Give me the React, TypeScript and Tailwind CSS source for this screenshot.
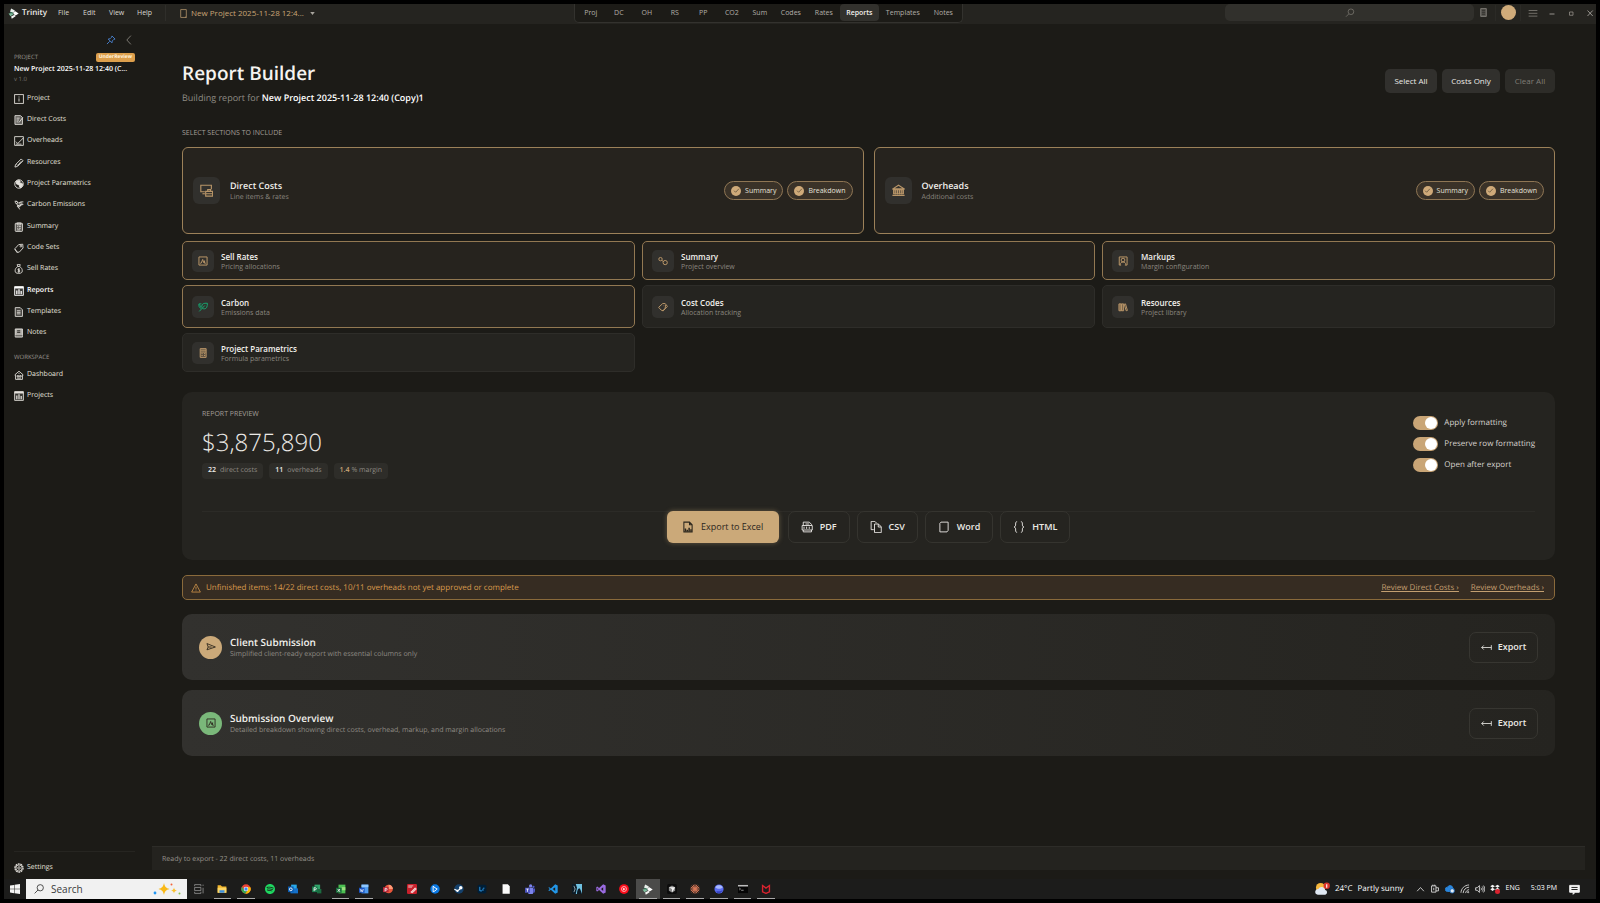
import { useState } from "react";
import type { ReactNode } from "react";
import { SiSpotify } from "react-icons/si";

type IconProps = { className?: string; children: ReactNode; w?: number };

function Ico({ className = "size-[10px]", children, w = 1.4 }: IconProps) {
  return (
    <svg
      viewBox="0 0 16 16"
      className={`shrink-0 ${className}`}
      fill="none"
      stroke="currentColor"
      strokeWidth={w}
      aria-hidden="true"
    >
      {children}
    </svg>
  );
}

const TrinityMark = ({ className = "size-[11px]" }: { className?: string }) => (
  <svg viewBox="0 0 16 16" className={`shrink-0 ${className}`} aria-hidden="true">
    <path d="M4.5.8 10 3.5 8 7.2 3 5.5z" fill="#e9efec" />
    <path d="M10 4.5 15.6 8 11 11 7.5 8.2z" fill="#ffffff" />
    <path d="M.8 8 6.5 7.4 8 9.2 3.5 12z" fill="#7fbf9f" />
    <path d="M4.5 12.5 9.5 9.8 11 12 5.5 15.5z" fill="#f4f7f5" />
    <path d="M3 5.5 8 7.2 7.4 8.2 3.4 7z" fill="#2f7d5b" />
  </svg>
);

const navIcons: Record<string, ReactNode> = {
  Project: (
    <>
      <rect x="1" y="1" width="14" height="14" />
      <path d="M8 7v5M8 4v1.6" />
    </>
  ),
  "Direct Costs": (
    <>
      <path d="M1.5 1h9l3 3v11h-12z" fill="currentColor" fillOpacity=".35" />
      <path d="M4 5h5M4 8h4M4 11h3M8 12l6-8" />
    </>
  ),
  Overheads: (
    <>
      <path d="M1 1h14v14H1z" />
      <path d="M3 9l3 3 9-9M3 13h9" />
    </>
  ),
  Resources: (
    <>
      <path d="M1.5 14.5l1-4 9-9 3 3-9 9z" />
      <path d="M4 10l2 2 6-7" />
    </>
  ),
  "Project Parametrics": (
    <>
      <circle cx="8" cy="8" r="6.8" />
      <path d="M3 4l4-2 3 1-1 3 4 1 1 3-3 4-2-1-1-4-4-1z" fill="currentColor" />
    </>
  ),
  "Carbon Emissions": (
    <>
      <path d="M1 2h3l3 3 4-2h4M4 5l2 4 5-1 4-1M6 9l3 6M11 8l-2 3" />
      <circle cx="4" cy="4" r="1.8" />
      <circle cx="11" cy="6" r="1.8" />
      <circle cx="7" cy="10" r="1.6" />
    </>
  ),
  Summary: (
    <>
      <rect x="2" y="2" width="11.5" height="13" rx="1" fill="currentColor" fillOpacity=".3" />
      <path d="M5 1.5h6v3H5zM5 7h2M8 7h3M5 10h2M8 10h3M5 12.6h5" />
    </>
  ),
  "Code Sets": (
    <>
      <path d="M1.5 9l6-6.5L14 2l.5 6-6 6.5-4 .5z" />
      <circle cx="11" cy="5" r="1.4" />
      <path d="M1 10l5 5" />
    </>
  ),
  "Sell Rates": (
    <>
      <path d="M5 1h5l-1 3H6zM6 4C3 6 1.8 8 1.8 11c0 3 2 4 5.7 4s5.7-1 5.7-4c0-3-1.2-5-4.2-7" />
      <path d="M9.5 8H6.5v2H9v2.5H5.8M7.6 7v7" />
    </>
  ),
  Reports: (
    <>
      <path d="M1 1h14v14H1z" fill="currentColor" fillOpacity=".15" />
      <path d="M1 2.5h14" strokeWidth="3" />
      <path d="M4.5 7v6M8 5v8M11.5 8v5" strokeWidth="2" />
    </>
  ),
  Templates: (
    <>
      <path d="M2 1h8l3.5 3.5V15H2z" fill="currentColor" fillOpacity=".2" />
      <path d="M4.5 6h6M4.5 8.5h6M4.5 11h6" />
    </>
  ),
  Notes: (
    <>
      <path d="M2 1.5h11.5v13H2z" fill="currentColor" fillOpacity=".75" />
      <path d="M5 4.5h5M5 7h5" stroke="#1c1b17" />
      <path d="M2 12.5h11.5" stroke="#1c1b17" strokeWidth="1" />
    </>
  ),
  Dashboard: (
    <>
      <path d="M1 8l7-6 7 6M2.5 7.5V15h11V7.5" />
      <path d="M5 9h2.5v2H5zM9 9h2.5v2H9zM5 13h6M8 5v1.5" />
    </>
  ),
};
navIcons.Projects = navIcons.Reports;

const mainNav = [
  "Project",
  "Direct Costs",
  "Overheads",
  "Resources",
  "Project Parametrics",
  "Carbon Emissions",
  "Summary",
  "Code Sets",
  "Sell Rates",
  "Reports",
  "Templates",
  "Notes",
];

function NavItem({ name, active = false }: { name: string; active?: boolean }) {
  return (
    <a
      href="#"
      aria-current={active ? "page" : undefined}
      className={`flex items-center gap-[3px] text-[7px] leading-[10px] ${
        active ? "font-semibold text-white" : "text-[#e4e1dc]"
      }`}
    >
      <Ico>{navIcons[name]}</Ico>
      {name}
    </a>
  );
}

function Sidebar() {
  return (
    <aside className="flex w-[148px] shrink-0 flex-col pr-[17px] pl-[10px]">
      <div className="flex h-[21px] items-end justify-end gap-[8px] pr-px">
        <button type="button" aria-label="Pin sidebar" className="text-[#4b86d8]">
          <Ico className="size-[10px]">
            <path d="M9.5 1.5l5 5-2 .5-2.5 2.5-.5 3-6-6 3-.5L9 3.5zM6 10l-4.5 4.5" />
          </Ico>
        </button>
        <button type="button" aria-label="Collapse sidebar" className="text-[#9a968f]">
          <Ico className="size-[10px]" w={1.2}>
            <path d="M11 1L4.5 8l6.5 7" />
          </Ico>
        </button>
      </div>
      <div className="flex h-[18px] items-center justify-between pt-[6px]">
        <span className="text-[6px] leading-[8px] text-[#9a968f]">PROJECT</span>
        <span className="rounded-[2px] bg-[#dd9f4c] px-[3px] text-[5px] leading-[9px] font-bold text-[#fff4df]">
          UnderReview
        </span>
      </div>
      <p className="mt-[2px] text-[7px] leading-[10px] font-semibold whitespace-nowrap text-white">
        New Project 2025-11-28 12:40 (C...
      </p>
      <p className="text-[6px] leading-[9px] text-[#76726c]">v 1.0</p>
      <nav aria-label="Project" className="mt-[4px] grid h-[256px] auto-rows-fr">
        {mainNav.map((n) => (
          <NavItem key={n} name={n} active={n === "Reports"} />
        ))}
      </nav>
      <p className="mt-[9px] text-[6px] leading-[8px] text-[#9a968f]">WORKSPACE</p>
      <nav aria-label="Workspace" className="mt-[3px] grid h-[43px] auto-rows-fr">
        <NavItem name="Dashboard" />
        <NavItem name="Projects" />
      </nav>
      <div className="mt-auto border-t border-[#262521] pt-[10px] pb-[5px]">
        <a href="#" className="flex items-center gap-[3px] text-[7px] leading-[12px] text-[#e4e1dc]">
          <Ico>
            <circle cx="8" cy="8" r="6.5" strokeDasharray="3 1" strokeWidth="2" />
            <circle cx="8" cy="8" r="5" />
            <circle cx="8" cy="8" r="2" />
          </Ico>
          Settings
        </a>
      </div>
    </aside>
  );
}

const tabs: [string, string][] = [
  ["Proj", "w-[28px]"],
  ["DC", "w-[28px]"],
  ["OH", "w-[28px]"],
  ["RS", "w-[28px]"],
  ["PP", "w-[29px]"],
  ["CO2", "w-[28px]"],
  ["Sum", "w-[28px]"],
  ["Codes", "w-[34px]"],
  ["Rates", "w-[32px]"],
  ["Reports", "w-[39px]"],
  ["Templates", "w-[48px]"],
  ["Notes", "w-[33px]"],
];

function TitleBar() {
  return (
    <header className="grid h-[20px] shrink-0 grid-cols-[9fr_auto_10fr] bg-[#252420]">
      <div className="flex items-center pb-[2px] pl-[4px]">
        <TrinityMark />
        <span className="ml-[3px] w-[36px] text-[8px] leading-[10px] font-semibold text-[#f0eeea]">Trinity</span>
        <div className="flex text-[7px] leading-[10px] text-[#dad7d1]">
          <button type="button" className="w-[25px] text-left">File</button>
          <button type="button" className="w-[26px] text-left">Edit</button>
          <button type="button" className="w-[28px] text-left">View</button>
          <button type="button" className="w-[28px] text-left">Help</button>
        </div>
        <span className="h-[16px] w-px bg-[#2f2e2a]" />
        <button type="button" className="ml-[13px] flex items-center gap-[3px] text-[#c9a576]">
          <Ico className="size-[9px]" w={1.2}>
            <path d="M3 1h10v14H3zM11 14l2 1" />
          </Ico>
          <span className="text-[8px] leading-[10px] font-medium">New Project 2025-11-28 12:4...</span>
          <svg viewBox="0 0 6 4" className="ml-[3px] h-[3px] w-[5px]" aria-hidden="true">
            <path d="M0 0h6L3 4z" fill="#a8a49d" />
          </svg>
        </button>
      </div>

      <nav
        aria-label="Sections"
        className="flex h-[19px] rounded-b-[5px] border border-t-0 border-[#33322e] bg-[#1c1b17] px-[2px] pb-px"
      >
        {tabs.map(([t, w]) => (
          <button
            key={t}
            type="button"
            className={`${w} rounded-[4px] text-center text-[7px] leading-[10px] ${
              t === "Reports" ? "bg-[#32312d] font-semibold text-[#f2f0ec]" : "text-[#b3afa8]"
            }`}
          >
            {t}
          </button>
        ))}
      </nav>

      <div className="flex items-center justify-end pb-[3px] text-[#8a867f]">
        <label className="relative flex h-[17px] w-[249px] items-center rounded-[5px] bg-[#31302c]">
          <input
            type="search"
            aria-label="Search"
            className="size-full rounded-[5px] bg-transparent px-2 text-[8px] text-white outline-none"
          />
          <Ico className="absolute left-[120px] size-[10px]" w={1}>
            <circle cx="9.5" cy="6" r="4.5" />
            <path d="M6 9.5L1.5 14" />
          </Ico>
        </label>
        <button type="button" aria-label="Calculator" className="ml-[5px]">
          <Ico className="size-[9px]">
            <path d="M3 1h10v14H3z" fill="currentColor" fillOpacity=".5" />
            <path d="M5 4h6M5 7.5h6M5 11h6" stroke="#252420" />
          </Ico>
        </button>
        <span className="mr-[5px] ml-[7px] h-[16px] w-px bg-[#2b2a26]" />
        <button type="button" aria-label="Account" className="size-[15px] rounded-full bg-[#d0ab7a]" />
        <span className="ml-[4px] h-[16px] w-px bg-[#2b2a26]" />
        <button type="button" aria-label="Menu" className="ml-[7px]">
          <Ico className="size-[10px]" w={1.2}>
            <path d="M1 4h14M1 8.5h14M1 13h14" />
          </Ico>
        </button>
        <button type="button" aria-label="Minimize" className="ml-[10px] text-[#c5c2bc]">
          <Ico className="size-[8px]">
            <path d="M3 10h10" />
          </Ico>
        </button>
        <button type="button" aria-label="Maximize" className="ml-[11px] text-[#a09c95]">
          <Ico className="size-[8px]">
            <path d="M5 6h7v6.5H5z" />
          </Ico>
        </button>
        <button type="button" aria-label="Close" className="mr-[2px] ml-[11px] text-[#c5c2bc]">
          <Ico className="size-[8px]">
            <path d="M3 3l10.5 11M13.5 3L3 14" />
          </Ico>
        </button>
      </div>
    </header>
  );
}

function Pill({ label }: { label: string }) {
  const [on, setOn] = useState(true);
  return (
    <button
      type="button"
      aria-pressed={on}
      onClick={() => setOn(!on)}
      className="flex h-[19px] items-center gap-[4px] rounded-full border border-[#8f7654] bg-[#3a3228] px-[6px] text-[7px] leading-[10px] text-[#e6e2dc]"
    >
      <span className="flex size-[10px] items-center justify-center rounded-full bg-[#cfaa79] text-[#4a3d2b]">
        {on && (
          <Ico className="size-[7px]" w={1.5}>
            <path d="M2.5 8.5L6 12l7.5-8" />
          </Ico>
        )}
      </span>
      {label}
    </button>
  );
}

function WideCard({ title, sub, icon }: { title: string; sub: string; icon: ReactNode }) {
  return (
    <section className="flex h-[87px] flex-1 items-center rounded-[6px] border border-[#9c8159] bg-[#26231e] px-[10px]">
      <span className="flex size-[27px] items-center justify-center rounded-[6px] bg-[#31302d] text-[#b89568]">
        <Ico className="size-[13px]" w={1.4}>{icon}</Ico>
      </span>
      <div className="ml-[10px] pt-[2px]">
        <h3 className="text-[9px] leading-[12px] font-semibold text-[#f2f0ec]">{title}</h3>
        <p className="text-[7px] leading-[12px] text-[#8a867f]">{sub}</p>
      </div>
      <div className="ml-auto flex gap-[4px]">
        <Pill label="Summary" />
        <Pill label="Breakdown" />
      </div>
    </section>
  );
}

const chartIcon = (
  <>
    <path d="M1.5 1.5h13v13h-13z" />
    <path d="M3.5 11.5H5l2.500-6 1.500 5 1.500-3v4h2" />
  </>
);

type Section = { title: string; sub: string; on: boolean; icon: ReactNode; green?: boolean };

const sections: Section[] = [
  { title: "Sell Rates", sub: "Pricing allocations", on: true, icon: chartIcon },
  {
    title: "Summary",
    sub: "Project overview",
    on: true,
    icon: (
      <>
        <circle cx="4" cy="5" r="2.7" />
        <circle cx="11.5" cy="10.5" r="3.4" />
        <path d="M6 7l3 2" />
      </>
    ),
  },
  {
    title: "Markups",
    sub: "Margin configuration",
    on: true,
    icon: (
      <>
        <path d="M2 14.5v-13h12.5v13H11M2 14.5h3" />
        <circle cx="8" cy="6.5" r="3" />
        <path d="M3.5 14c0-3 2-4.5 4.5-4.500s4.500 1.500 4.500 4.500" />
      </>
    ),
  },
  {
    title: "Carbon",
    sub: "Emissions data",
    on: true,
    green: true,
    icon: (
      <>
        <path d="M15 2c-6-.5-9 1-9 5 0 3 2 4 4 4 4 0 5-4 5-9zM2 15L11 5.5" />
        <path d="M5.5 3h-4C1 7 2 9.5 5 10" />
        <path d="M2 4l3 4" />
      </>
    ),
  },
  {
    title: "Cost Codes",
    sub: "Allocation tracking",
    on: false,
    icon: (
      <>
        <path d="M1 8.5l6.5-6h4L15 7l-6.5 7L5 13z" />
        <path d="M7.5 14c3-2 5-5 4.5-9M9 6h1" />
      </>
    ),
  },
  {
    title: "Resources",
    sub: "Project library",
    on: false,
    icon: (
      <>
        <path d="M1.5 3H5v11H1.5zM5.5 3H9v11H5.5z" fill="currentColor" fillOpacity=".55" />
        <path d="M10 3.5l2-.5 3 10.5-2 .5z" />
      </>
    ),
  },
  {
    title: "Project Parametrics",
    sub: "Formula parametrics",
    on: false,
    icon: (
      <>
        <path d="M3.5 1H13v14H3.5z" fill="currentColor" fillOpacity=".3" />
        <path d="M4 3.5h9M4 6.5h9M5.5 9h2M9.5 9h2M5.5 12h2M9.5 12h2" />
      </>
    ),
  },
];

function SectionCard({ s }: { s: Section }) {
  const [on, setOn] = useState(s.on);
  return (
    <button
      type="button"
      aria-pressed={on}
      onClick={() => setOn(!on)}
      className={`flex items-center rounded-[5px] border pl-[9px] text-left ${
        on ? "border-[#927852] bg-[#26231e]" : "border-[#2e2d29] bg-[#252420]"
      }`}
    >
      <span
        className={`flex size-[22px] items-center justify-center rounded-[5px] bg-[#31302d] ${
          s.green ? "text-[#17a56f]" : "text-[#b89568]"
        }`}
      >
        <Ico className="size-[10px]" w={1.6}>{s.icon}</Ico>
      </span>
      <span className="ml-[7px] flex flex-col pt-px">
        <span className="text-[8px] leading-[11px] font-semibold text-[#f2f0ec]">{s.title}</span>
        <span className="text-[7px] leading-[10px] text-[#8a867f]">{s.sub}</span>
      </span>
    </button>
  );
}

function Chip({ n, label, gold = false }: { n: string; label: string; gold?: boolean }) {
  return (
    <span className="flex h-[16px] items-center rounded-[4px] bg-[#2e2d29] px-[6px] text-[7px] leading-[10px] text-[#8f8b84]">
      <b className={`font-semibold ${gold ? "mr-[2px] text-[#c9a576]" : "mr-[4px] text-[#f2f0ec]"}`}>{n}</b>
      {label}
    </span>
  );
}

function Toggle({ label }: { label: string }) {
  return (
    <label className="flex h-[14px] items-center gap-[6px] text-[8px] leading-[10px] text-[#d6d3ce]">
      <input
        type="checkbox"
        role="switch"
        defaultChecked
        className="flex h-[14px] w-[25px] appearance-none items-center rounded-full bg-[#45433e] px-px before:size-[12px] before:rounded-full before:bg-white checked:justify-end checked:bg-[#c9a576]"
      />
      {label}
    </label>
  );
}

const formats: { label: string; icon: ReactNode }[] = [
  {
    label: "PDF",
    icon: (
      <>
        <path d="M3 6V1.5h8L14 4.5V6M3 12v2.5h11V12M1.5 6H15v6H1.5z" />
        <path d="M4 7.5v3M7.5 7.5v3M11 7.5v3M6 4h5" />
      </>
    ),
  },
  {
    label: "CSV",
    icon: (
      <>
        <path d="M5 11.5H1.5V.5h5L9 3" />
        <path d="M6 4h5l4 3.5v8H6zM11 4v4h4" />
      </>
    ),
  },
  {
    label: "Word",
    icon: (
      <>
        <path d="M4 1.5h9.5v11M12 14.5H2.5V3" />
        <path d="M4 1.5L2.5 3M13.5 12.5L12 14.5" />
      </>
    ),
  },
  {
    label: "HTML",
    icon: (
      <>
        <path d="M5.5 1c-2 0-2 1-2 3s0 3.500-2 4c2 .5 2 2 2 4s0 3 2 3" />
        <path d="M10.5 1c2 0 2 1 2 3s0 3.500 2 4c-2 .5-2 2-2 4s0 3-2 3" />
      </>
    ),
  },
];

function Preview() {
  return (
    <section className="mt-[20px] flex h-[168px] flex-col rounded-[10px] bg-[#252420] px-[20px] pt-[18px]">
      <div className="flex h-[101px] items-start justify-between">
        <div>
          <h2 className="text-[7px] leading-[10px] text-[#a39f98]">REPORT PREVIEW</h2>
          <p className="mt-[7px] text-[24px] leading-[32px] font-light text-[#eceae6]">$3,875,890</p>
          <div className="mt-[4px] flex gap-[6px]">
            <Chip n="22" label="direct costs" />
            <Chip n="11" label="overheads" />
            <Chip n="1.4" label="% margin" gold />
          </div>
        </div>
        <div className="mt-[6px] flex flex-col gap-[7px]">
          <Toggle label="Apply formatting" />
          <Toggle label="Preserve row formatting" />
          <Toggle label="Open after export" />
        </div>
      </div>
      <div className="border-t border-[#2c2b27]">
        <div className="-mt-px flex justify-center gap-[7px] text-[9px] leading-[12px] font-semibold text-[#eceae6]">
          <button
            type="button"
            className="mr-[2px] flex h-[32px] w-[112px] items-center justify-center gap-[7px] rounded-[6px] bg-[#cba979] font-medium text-[#2b261d] shadow-[0_0_5px_rgba(203,169,121,0.4)]"
          >
            <Ico className="size-[12px]">
              <path d="M2.5 1.5H10L13.5 5v9.5h-11zM10 1.5V5h3.5" />
              <path d="M4.5 14v-4M7 14v-2.5M9.5 14V9M12 14v-3" strokeWidth="2" />
            </Ico>
            Export to Excel
          </button>
          {formats.map((f) => (
            <button
              key={f.label}
              type="button"
              className="flex h-[32px] items-center gap-[7px] rounded-[7px] border border-[#35342f] bg-[#252420] px-[12px]"
            >
              <Ico className="size-[12px]" w={1.2}>{f.icon}</Ico>
              {f.label}
            </button>
          ))}
        </div>
      </div>
    </section>
  );
}

function Submission({ title, sub, tone, icon }: { title: string; sub: string; tone: string; icon: ReactNode }) {
  return (
    <section className="mt-[10px] flex h-[66px] items-center rounded-[10px] bg-linear-to-r from-[#32312e] to-[#252420] pr-[17px] pl-[17px]">
      <span className={`flex size-[23px] items-center justify-center rounded-full text-[#2b261d] ${tone}`}>
        <Ico className="size-[10px]">{icon}</Ico>
      </span>
      <div className="ml-[8px] pt-[2px]">
        <h3 className="text-[10px] leading-[13px] font-semibold text-[#f2f0ec]">{title}</h3>
        <p className="text-[7px] leading-[12px] text-[#8f8b84]">{sub}</p>
      </div>
      <button
        type="button"
        className="ml-auto flex h-[31px] w-[69px] items-center justify-center gap-[6px] rounded-[7px] border border-[#373631] text-[9px] leading-[12px] font-semibold text-[#eceae6]"
      >
        <Ico className="size-[11px]" w={1.2}>
          <path d="M4 5L1 8l3 3M1 8h14M15 4.5v7" />
        </Ico>
        Export
      </button>
    </section>
  );
}

function Content() {
  return (
    <main className="flex min-w-0 flex-1 flex-col">
      <div className="flex-1 pr-[41px] pl-[30px]">
        <div className="flex items-end justify-between pt-[35px]">
          <div>
            <h1 className="text-[19px] leading-[28px] font-semibold text-[#f5f3ef]">Report Builder</h1>
            <p className="mt-[4px] text-[9px] leading-[14px] text-[#8f8b84]">
              Building report for <b className="font-semibold text-white">New Project 2025-11-28 12:40 (Copy)1</b>
            </p>
          </div>
          <div className="mb-[12px] flex gap-[5px] text-[8px] leading-[10px] font-medium text-[#eceae6]">
            <button type="button" className="h-[24px] w-[52px] rounded-[5px] bg-[#31302d]">Select All</button>
            <button type="button" className="h-[24px] w-[58px] rounded-[5px] bg-[#31302d]">Costs Only</button>
            <button type="button" className="h-[24px] w-[50px] rounded-[5px] bg-[#2d2c28] text-[#807c76]">Clear All</button>
          </div>
        </div>
        <h2 className="mt-[24px] text-[7px] leading-[10px] text-[#a39f98]">SELECT SECTIONS TO INCLUDE</h2>
        <div className="mt-[8px] flex gap-[10px]">
          <WideCard
            title="Direct Costs"
            sub="Line items & rates"
            icon={
              <>
                <path d="M6 9.5H1v-8h13v5" />
                <path d="M3 12h3" />
                <path d="M7 9h8.5v6H7zM9.5 9V7H13v2M7 12h8.5" />
              </>
            }
          />
          <WideCard
            title="Overheads"
            sub="Additional costs"
            icon={
              <>
                <path d="M1 6l7-4.5L15 6z" />
                <path d="M2 7h12v5H2z" fill="currentColor" fillOpacity=".4" />
                <path d="M4 6.5v6M6.7 6.5v6M9.3 6.5v6M12 6.5v6M.5 14h15" />
              </>
            }
          />
        </div>
        <div className="mt-[7px] grid grid-cols-3 grid-rows-[39px_43px_39px] gap-x-[7px] gap-y-[5px]">
          {sections.map((s) => (
            <SectionCard key={s.title} s={s} />
          ))}
        </div>
        <Preview />
        <div className="mt-[15px] mb-[14px] flex h-[25px] items-center rounded-[5px] border border-[#8a6a3b] bg-[#362c22] px-[8px] text-[8px] leading-[10px] text-[#d99b4d]">
          <Ico className="size-[10px]" w={1.2}>
            <path d="M8 1.5l7 13H1zM8 6v4.5M8 12v1.2" />
          </Ico>
          <p className="ml-[5px]">Unfinished items: 14/22 direct costs, 10/11 overheads not yet approved or complete</p>
          <div className="ml-auto flex gap-[12px] pr-[2px] text-[#c39f70] underline">
            <a href="#">Review Direct Costs ›</a>
            <a href="#">Review Overheads ›</a>
          </div>
        </div>
        <Submission
          title="Client Submission"
          sub="Simplified client-ready export with essential columns only"
          tone="bg-[#cba979]"
          icon={<path d="M1.5 2.5L15 8 1.5 12.5 3.5 8zM3.5 8H9" />}
        />
        <Submission
          title="Submission Overview"
          sub="Detailed breakdown showing direct costs, overhead, markup, and margin allocations"
          tone="bg-[#7ab87a]"
          icon={chartIcon}
        />
      </div>
      <footer className="mr-[11px] mb-[9px] flex h-[24px] items-center border-t border-[#2d2c28] bg-[#24231f] px-[10px] pt-[2px] text-[7px] leading-[10px] text-[#96928b]">
        Ready to export - 22 direct costs, 11 overheads
      </footer>
    </main>
  );
}

type TaskApp = { name: string; open?: boolean; active?: boolean; art: ReactNode };

const apps: TaskApp[] = [
  {
    name: "Task view",
    art: (
      <g stroke="#b5b5b5" fill="none">
        <path d="M1 3.5V1h10v2.5M1 5.5h10v5H1zM1 12.500V15h10v-2.500M14.500 1v2M14.500 6v9" />
      </g>
    ),
  },
  {
    name: "File Explorer",
    open: true,
    art: (
      <>
        <path d="M1 2h5l2 2h7v10H1z" fill="#f2b62c" />
        <path d="M1 6h14v8H1z" fill="#fbd667" />
        <path d="M4 10h8v4H4z" fill="#3d8fe0" />
      </>
    ),
  },
  {
    name: "Chrome",
    open: true,
    art: (
      <>
        <circle cx="8" cy="8" r="7.5" fill="#e94335" />
        <path d="M1.5 4.2A7.5 7.5 0 0 0 7 15.4l3.5-5.9L5 9z" fill="#34a853" />
        <path d="M7 15.4A7.5 7.5 0 0 0 15 5H8l3 5z" fill="#fbbc05" />
        <circle cx="8" cy="8" r="3.6" fill="#fff" />
        <circle cx="8" cy="8" r="2.7" fill="#4285f4" />
      </>
    ),
  },
  { name: "Spotify", art: <SiSpotify color="#1ed760" size={16} /> },
  {
    name: "Outlook",
    art: (
      <>
        <path d="M5 1h9v9H5z" fill="#28a8ea" />
        <path d="M4 7h12v8H4z" fill="#1470c9" />
        <path d="M0 4h9v9H0z" fill="#0b5cb0" />
        <circle cx="4.5" cy="8.5" r="2.2" fill="none" stroke="#fff" strokeWidth="1.4" />
      </>
    ),
  },
  {
    name: "Project",
    art: (
      <>
        <path d="M4 1h9v7H4z" fill="#31a36a" />
        <path d="M8 8h7v7H8z" fill="#1c6b41" />
        <path d="M0 4h9v9H0z" fill="#16794a" />
        <path d="M3.3 11.5V6h2a1.5 1.5 0 0 1 0 3.200h-2" fill="none" stroke="#fff" strokeWidth="1.3" />
      </>
    ),
  },
  {
    name: "Excel",
    open: true,
    art: (
      <>
        <path d="M4 1h11v14H4z" fill="#4cbf52" />
        <path d="M9 5h6v5H9z" fill="#9be07d" />
        <path d="M0 6h9v8H0z" fill="#176d3b" />
        <path d="M2.7 8l3.6 4.5M6.3 8l-3.600 4.500" stroke="#fff" strokeWidth="1.3" />
      </>
    ),
  },
  {
    name: "Word",
    open: true,
    art: (
      <>
        <path d="M4 1h11v14H4z" fill="#4f9bf0" />
        <path d="M4 1h11v4H4z" fill="#8ec7ff" />
        <path d="M0 6h9v8H0z" fill="#1b55c4" />
        <path d="M2 8l1.3 4.5L4.5 9l1.200 3.500L7 8" stroke="#fff" fill="none" />
      </>
    ),
  },
  {
    name: "PowerPoint",
    art: (
      <>
        <circle cx="9" cy="8" r="6.8" fill="#e8553a" />
        <path d="M9 1.2A6.8 6.8 0 0 1 15.800 8H9z" fill="#ff9a76" />
        <path d="M0 5h9v8H0z" fill="#b9273a" />
        <path d="M3.3 12V7h2a1.3 1.3 0 0 1 0 2.800h-2" fill="none" stroke="#fff" strokeWidth="1.2" />
      </>
    ),
  },
  {
    name: "PDF editor",
    art: (
      <>
        <rect width="16" height="16" rx="2" fill="#c9202b" />
        <path d="M2 3h8M2 5h6M6 13l7-7 2 2-6 6z" stroke="#fff" fill="#f3b9b9" />
      </>
    ),
  },
  {
    name: "Player",
    art: (
      <>
        <circle cx="8" cy="8" r="7.5" fill="#0a78e3" />
        <path d="M5 3.5v9l3-1.5 3.5-3L8 6z" fill="none" stroke="#fff" strokeWidth="1.5" />
      </>
    ),
  },
  {
    name: "Steam",
    art: (
      <>
        <circle cx="8" cy="8" r="7.5" fill="#14406b" />
        <path d="M.6 8.5l5 2.5 4-3" stroke="#fff" strokeWidth="2" fill="none" />
        <circle cx="10.8" cy="6" r="2.8" fill="#fff" />
        <circle cx="5.5" cy="11" r="1.8" fill="#fff" />
      </>
    ),
  },
  {
    name: "Lightroom",
    art: (
      <>
        <rect x="1" y="1" width="14" height="14" rx="2.5" fill="#001e36" />
        <path d="M4.5 4.5V11H8M9.5 11V7.500c.5-.7 1.300-1 2.300-.8" stroke="#31a8ff" strokeWidth="1.4" fill="none" />
      </>
    ),
  },
  { name: "Document", art: <path d="M2.5.5H11L14 3.5v12H2.500z" fill="#fafafa" /> },
  {
    name: "Teams",
    art: (
      <>
        <circle cx="9" cy="3" r="2.6" fill="#7b83eb" />
        <circle cx="13.5" cy="4.5" r="1.8" fill="#5059c9" />
        <path d="M5 6h8v6a4 4 0 0 1-8 2z" fill="#7b83eb" />
        <path d="M13 7h3v4a3 3 0 0 1-3 3z" fill="#5059c9" />
        <path d="M0 6h8v8H0z" fill="#4b53bc" />
        <path d="M2 8h4M4 8v4.5" stroke="#fff" strokeWidth="1.2" />
      </>
    ),
  },
  {
    name: "VS Code",
    art: (
      <path
        d="M11.5.5l4 2v11l-4 2L4.5 9 2 11 .5 10 3 8 .5 6 2 5l2.5 2zM11.500 5l-4 3 4 3z"
        fill="#2397e8"
        fillRule="evenodd"
      />
    ),
  },
  {
    name: "Kindle",
    art: (
      <>
        <path d="M0 0h16v16H0z" fill="#6fc0e0" />
        <path d="M0 0h6l2 6-2 10H0zM8 16c0-5 1-8 3-9s3 4 5 9z" fill="#0c1a25" />
        <path d="M3 3l2 5-2 5" stroke="#d3eef8" fill="none" />
      </>
    ),
  },
  {
    name: "Visual Studio",
    art: (
      <path
        d="M11.5.5l4 2v11l-4 2L5 9.5 2 12 .5 11V5L2 4l3 2.5zM11.5 5L8 8l3.500 3zM2.200 6.200v3.600L4 8z"
        fill="#9a6be0"
        fillRule="evenodd"
      />
    ),
  },
  {
    name: "YouTube Music",
    art: (
      <>
        <circle cx="8" cy="8" r="7.8" fill="#fb0d1b" />
        <circle cx="8" cy="8" r="4" fill="none" stroke="#fff" />
        <path d="M6.7 5.8v4.4L10.300 8z" fill="#fff" />
      </>
    ),
  },
  { name: "Trinity", open: true, active: true, art: null },
  {
    name: "Cursor",
    open: true,
    art: (
      <>
        <rect width="16" height="16" rx="3" fill="#0c0c0c" />
        <path d="M8 2.5l5 2.8v5.500L8 13.500l-5-2.700V5.300z" fill="#8c8c8c" />
        <path d="M3 5.3h10L8 13.5V8z" fill="#f2f2f2" />
      </>
    ),
  },
  {
    name: "Claude",
    open: true,
    art: (
      <path
        d="M8 .5v15M.5 8h15M2.7 2.7l10.600 10.600M13.300 2.700L2.700 13.300M5 1.200l6 13.600M11 1.200L5 14.800M1.200 5l13.600 6M1.200 11l13.600-6"
        stroke="#d97757"
        strokeWidth="1.5"
      />
    ),
  },
  {
    name: "Messenger",
    open: true,
    art: (
      <>
        <circle cx="8" cy="8" r="7.3" fill="#5a6cf0" />
        <path d="M2 5c3-4 9-4 12 0-3 3-8 4-12 0z" fill="#a8b8ff" />
        <path d="M4 11c3 1 7 1 10-2-1 5-6 7-10 5z" fill="#3743c0" />
      </>
    ),
  },
  {
    name: "Terminal",
    open: true,
    art: (
      <>
        <path d="M0 1.5h16v13H0z" fill="#050505" />
        <path d="M0 1.5h16V4H0z" fill="#bdbdbd" />
        <path d="M2 6.5L4 8 2 9.500M5 10h4" stroke="#ddd" fill="none" />
      </>
    ),
  },
  {
    name: "McAfee",
    open: true,
    art: <path d="M2.500 12.500V2.500L8 6.500l5.500-4v10L8 15z" stroke="#d8232f" strokeWidth="2.2" fill="none" />,
  },
];

function Taskbar() {
  return (
    <footer className="flex h-[20px] shrink-0 items-stretch bg-[#1c1c1b] text-white">
      <button type="button" aria-label="Start" className="flex w-[22px] items-center justify-center">
        <svg viewBox="0 0 16 16" className="size-[10px]" aria-hidden="true">
          <path
            d="M0 2.3l6.6-.9v6.200H0zM7.400 1.300L16 0v7.600H7.400zM0 8.400h6.600v6.200L0 13.700zM7.400 8.400H16V16l-8.600-1.300z"
            fill="#f5f5f5"
          />
        </svg>
      </button>
      <label className="flex w-[161px] items-center bg-[#f1f1f1] pl-[8px] text-[#3a3a3a]">
        <Ico className="size-[10px]">
          <circle cx="10" cy="6" r="5" />
          <path d="M6.5 9.5L1 15" />
        </Ico>
        <input
          type="text"
          aria-label="Search Windows"
          placeholder="Search"
          className="ml-[7px] w-[90px] bg-transparent text-[10px] leading-[14px] outline-none placeholder:text-[#3a3a3a]"
        />
        <svg viewBox="0 0 28 14" className="ml-[12px] h-[14px] w-[28px]" aria-hidden="true">
          <path d="M11 1c.8 3.600 1.800 5 5.500 6-3.700 1-4.700 2.400-5.500 6-.8-3.600-1.800-5-5.500-6C9.200 6 10.200 4.600 11 1z" fill="#f9b916" />
          <path d="M21 5.500c.4 2 1 2.600 3 3-2 .5-2.600 1-3 3-.4-2-1-2.500-3-3 2-.4 2.600-1 3-3z" fill="#fbc02d" />
          <circle cx="2" cy="11" r="1.4" fill="#2196f3" />
          <circle cx="18.5" cy="2.5" r="1" fill="#f4623a" />
          <circle cx="26.5" cy="11.5" r="1" fill="#8bc34a" />
        </svg>
      </label>
      <nav aria-label="Apps" className="grid w-[591px] auto-cols-fr grid-flow-col">
        {apps.map((a) => (
          <button
            key={a.name}
            type="button"
            aria-label={a.name}
            className={`relative flex items-center justify-center ${a.active ? "bg-[#4b4b4a]" : ""}`}
          >
            {a.art ? (
              <svg viewBox="0 0 16 16" className="size-[10px]" aria-hidden="true">
                {a.art}
              </svg>
            ) : (
              <TrinityMark />
            )}
            {a.open && <span className="absolute inset-x-[3px] bottom-0 h-px bg-[#a9a9a9]" />}
          </button>
        ))}
      </nav>
      <div className="ml-auto flex items-center text-[7px] leading-[10px]">
        <svg viewBox="0 0 16 16" className="size-[15px]" aria-hidden="true">
          <circle cx="6" cy="6" r="5" fill="#f6b73c" />
          <path d="M3 13.5a3 3 0 0 1 .5-6 4 4 0 0 1 7.5 1 2.600 2.600 0 0 1 0 5z" fill="#dfe7f2" />
          <circle cx="12.5" cy="4" r="3.4" fill="#d8342c" />
          <path d="M12.5 2.4V6" stroke="#fff" strokeWidth="1.2" />
        </svg>
        <span className="ml-[5px] text-[8px]">24°C</span>
        <span className="ml-[5px] text-[8px]">Partly sunny</span>
        <span className="ml-[12px] flex items-center gap-[5px] text-[#dedede]">
          <Ico className="size-[9px]" w={1.5}>
            <path d="M2 11l6-6.5 6 6.5" />
          </Ico>
          <Ico className="size-[10px]">
            <path d="M2.5 3h7v10h-7zM4.5 1v2M7.500 1v2M6 6v4M9.500 6h4v5h-4" />
          </Ico>
          <Ico className="size-[10px]">
            <path d="M4 12a3.5 3.5 0 0 1 0-7 4.500 4.500 0 0 1 8.500 1.500A3 3 0 0 1 12.500 12z" fill="#2a86dd" stroke="#2a86dd" />
            <circle cx="11.5" cy="11" r="3.5" fill="#e5edf5" stroke="#1a68b8" />
          </Ico>
          <Ico className="size-[10px]">
            <path d="M1.5 14C2 7 7 2 14.5 1.5M5 14.500c.5-5 4-9 9.500-9.500M9 14.500c.5-3 2.500-5 5.500-5.500" />
            <circle cx="13" cy="13" r="1" />
          </Ico>
          <Ico className="size-[10px]">
            <path d="M1 6h2.5L7 2.5v11L3.500 10H1zM9.500 6c1 1 1 3 0 4M11.500 4c2 2 2 6 0 8M13.500 2.500c3 3 3 8 0 11" />
          </Ico>
          <Ico className="size-[10px]">
            <path
              d="M4 1l4 2.5L4 6 .5 3.500zM12 1L8 3.500 12 6l3.500-2.500zM4 6l4 2.500L4 11 .5 8.500zM12 6L8 8.500l4 2.500 3.500-2.500z"
              fill="#f2f2f2"
              stroke="none"
            />
            <circle cx="12" cy="12" r="4" fill="#d8232f" stroke="none" />
          </Ico>
        </span>
        <span className="ml-[6px]">ENG</span>
        <span className="ml-[11px]">5:03 PM</span>
        <button type="button" aria-label="Notifications" className="mr-[16px] ml-[12px]">
          <Ico className="size-[11px]">
            <path d="M1 2h14v10H9l-3 3v-3H1z" fill="#f5f5f5" stroke="#f5f5f5" />
            <path d="M3.5 5h9M3.5 8h9" stroke="#1c1c1b" />
          </Ico>
        </button>
      </div>
    </footer>
  );
}

export default function App() {
  return (
    <div className="flex min-h-screen flex-col bg-black p-[4px] font-['Open_Sans','Noto_Sans',sans-serif] [text-rendering:geometricPrecision]">
      <div className="flex flex-1 flex-col bg-[#1c1b17]">
        <TitleBar />
        <div className="flex flex-1">
          <Sidebar />
          <Content />
        </div>
        <Taskbar />
      </div>
    </div>
  );
}
